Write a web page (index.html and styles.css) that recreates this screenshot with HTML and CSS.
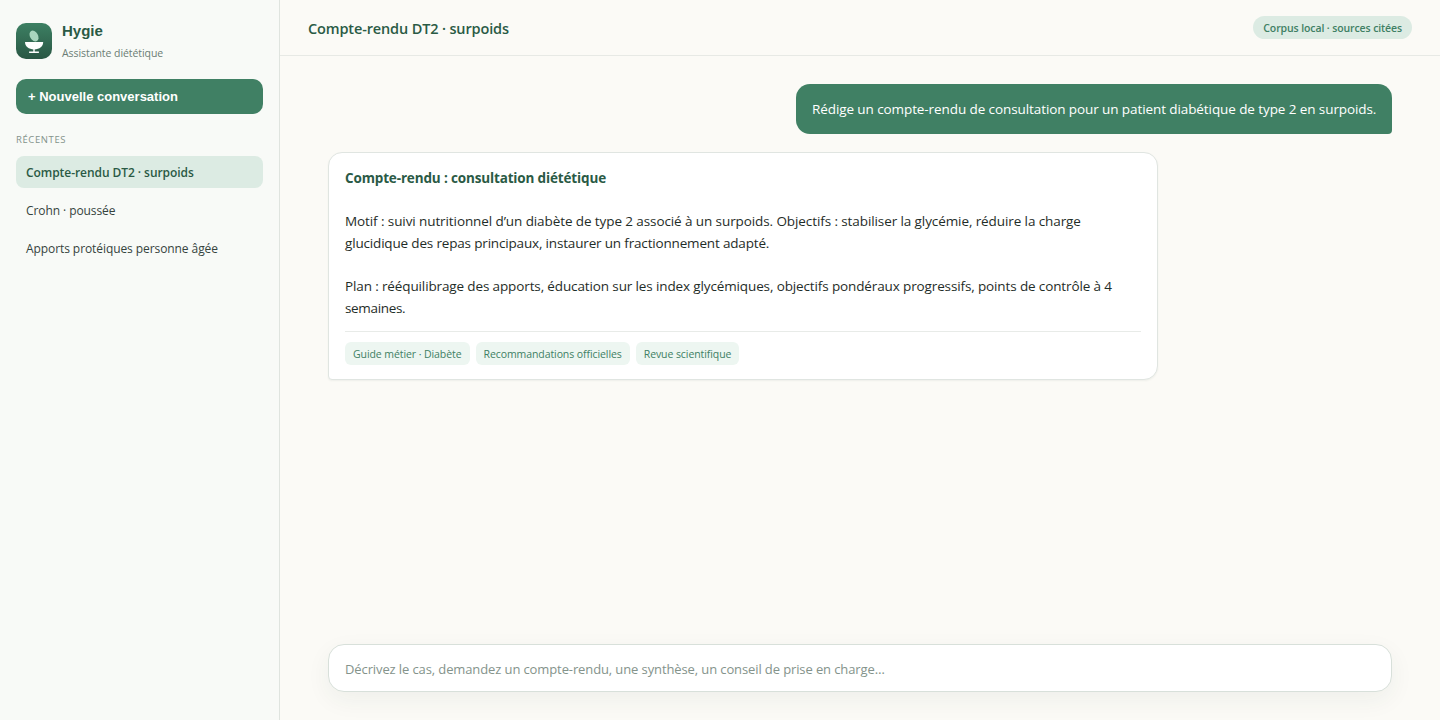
FILE: index.html
```html
<!DOCTYPE html>
<html lang="fr">
<head>
    <meta charset="UTF-8">
    <title>Hygie</title>
    <link rel="stylesheet" href="styles.css">
</head>
<body>
    <div class="app">
        <aside class="sidebar">
            <div class="brand">
                <svg class="logo" viewBox="0 0 36 36" width="36" height="36">
                    <defs>
                        <linearGradient id="logo-bg" x1="0" y1="0" x2="0" y2="1">
                            <stop offset="0" stop-color="#3d8063"/>
                            <stop offset="1" stop-color="#295744"/>
                        </linearGradient>
                    </defs>
                    <rect width="36" height="36" rx="10" fill="url(#logo-bg)"/>
                    <ellipse cx="18" cy="13" rx="4" ry="5.8" transform="rotate(-30 18 13)" fill="#a9d6be"/>
                    <path d="M9 19h18.2c0 4.4-3.5 7.4-9.1 7.4S9 23.4 9 19z" fill="#fff"/>
                    <path d="M17.3 26h1.4v2.4h4.2v1.5h-9.8v-1.5h4.2z" fill="#fff"/>
                </svg>
                <div class="brand-text">
                    <div class="brand-name">Hygie</div>
                    <div class="brand-sub">Assistante diététique</div>
                </div>
            </div>
            <button class="new-button">+ Nouvelle conversation</button>
            <div class="label">RÉCENTES</div>
            <nav class="history">
                <a class="item active">Compte-rendu DT2 · surpoids</a>
                <a class="item">Crohn · poussée</a>
                <a class="item">Apports protéiques personne âgée</a>
            </nav>
        </aside>
        <main class="main">
            <header class="topbar">
                <h1 class="title">Compte-rendu DT2 · surpoids</h1>
                <span class="badge">Corpus local · sources citées</span>
            </header>
            <section class="messages">
                <div class="message user">Rédige un compte-rendu de consultation pour un patient diabétique de type 2 en surpoids.</div>
                <div class="message bot">
                    <h2 class="report-title">Compte-rendu : consultation diététique</h2>
                    <p class="motif">Motif : suivi nutritionnel d’un diabète de type 2 associé à un surpoids. Objectifs : stabiliser la glycémie, réduire la charge<br><span class="tight">glucidique des repas principaux, instaurer un fractionnement adapté.</span></p>
                    <p class="plan">Plan : rééquilibrage des apports, éducation sur les index glycémiques, objectifs pondéraux progressifs, points de contrôle à 4<br><span class="tighter">semaines.</span></p>
                    <div class="sources">
                        <span class="source">Guide métier · Diabète</span>
                        <span class="source">Recommandations officielles</span>
                        <span class="source">Revue scientifique</span>
                    </div>
                </div>
            </section>
            <footer class="composer">
                <div class="input">Décrivez le cas, demandez un compte-rendu, une synthèse, un conseil de prise en charge…</div>
            </footer>
        </main>
    </div>
</body>
</html>
```
FILE: styles.css
```css
* {
    box-sizing: border-box;
}

body {
    margin: 0;
    font-family: "Open Sans", "Noto Sans", sans-serif;
    font-size: 13.5px;
    color: #1f2d28;
    background: #fbfaf6;
}

.app {
    display: flex;
    height: 100vh;
    overflow: hidden;
}

.sidebar {
    width: 280px;
    padding: 20px 16px;
    background: #f8faf7;
    border-right: 1px solid #dfe4df;
    white-space: nowrap;
}

.brand {
    display: flex;
    align-items: center;
    gap: 10px;
    height: 42px;
}

.brand-name {
    font: bold 15px/20px "Liberation Sans", Arial, sans-serif;
    color: #2a5a45;
}

.brand-sub {
    margin-top: 4px;
    font-size: 10.5px;
    line-height: 16px;
    letter-spacing: -0.06px;
    color: #6b7d74;
}

.new-button {
    display: block;
    width: 100%;
    height: 35px;
    margin-top: 17px;
    padding: 0 12px;
    border: none;
    border-radius: 10px;
    background: #408064;
    color: white;
    font: bold 13px "Liberation Sans", Arial, sans-serif;
    text-align: left;
}

.label {
    margin: 18px 0 9px;
    font-size: 9.5px;
    line-height: 15px;
    letter-spacing: 0.6px;
    color: #84938b;
}

.history {
    display: flex;
    flex-direction: column;
    gap: 6px;
}

.item {
    height: 32px;
    padding: 0 10px;
    border-radius: 8px;
    font-size: 12px;
    line-height: 33px;
    letter-spacing: -0.08px;
    color: #35433d;
}

.active {
    background: #dcebe3;
    color: #2a5a45;
    font-weight: 600;
    letter-spacing: -0.06px;
}

.main {
    display: flex;
    flex: 1;
    flex-direction: column;
}

.topbar {
    display: flex;
    align-items: center;
    justify-content: space-between;
    height: 56px;
    padding: 0 28px;
    border-bottom: 1px solid #e7e9e5;
}

.title {
    margin: 2px 0 0;
    font-size: 14.5px;
    font-weight: 600;
    letter-spacing: -0.14px;
    color: #2a5a45;
}

.badge {
    height: 23px;
    padding: 0 10px;
    border-radius: 12px;
    background: #dcebe3;
    color: #408064;
    font-size: 10.5px;
    font-weight: 600;
    line-height: 24px;
    letter-spacing: -0.11px;
}

.messages {
    display: flex;
    flex: 1;
    flex-direction: column;
    gap: 18px;
    padding: 28px 48px;
}

.message {
    white-space: nowrap;
    line-height: 22px;
}

.user {
    align-self: flex-end;
    width: 596px;
    padding: 14px 16px;
    border-radius: 14px 14px 4px 14px;
    background: #408064;
    color: white;
    letter-spacing: -0.09px;
}

.bot {
    width: 830px;
    height: 228px;
    padding: 14px 16px;
    border: 1px solid #e0e5e1;
    border-radius: 14px 14px 14px 4px;
    background: white;
    box-shadow: 0 1px 2px rgba(30, 60, 45, 0.06);
}

.report-title {
    margin: 0;
    font-size: 13.5px;
    line-height: 22px;
    letter-spacing: -0.15px;
    color: #2a5a45;
}

.motif,
.plan {
    margin: 21px 0 0;
    letter-spacing: -0.095px;
}

.plan {
    letter-spacing: -0.127px;
}

.tight {
    letter-spacing: -0.17px;
}

.tighter {
    letter-spacing: -0.33px;
}

.sources {
    display: flex;
    gap: 6px;
    margin-top: 12px;
    padding-top: 10px;
    border-top: 1px solid #e8ebe8;
}

.source {
    height: 23px;
    padding: 0 8px;
    border-radius: 6px;
    background: #edf6f1;
    color: #408064;
    font-size: 10.5px;
    line-height: 24px;
    letter-spacing: -0.08px;
}

.composer {
    padding: 0 48px 28px;
}

.input {
    height: 48px;
    padding: 0 16px;
    border: 1px solid #d8e0da;
    border-radius: 16px;
    background: white;
    box-shadow: 0 8px 24px rgba(30, 60, 45, 0.06);
    color: #84938b;
    font-size: 13px;
    line-height: 49px;
    letter-spacing: -0.11px;
    white-space: nowrap;
}
```
